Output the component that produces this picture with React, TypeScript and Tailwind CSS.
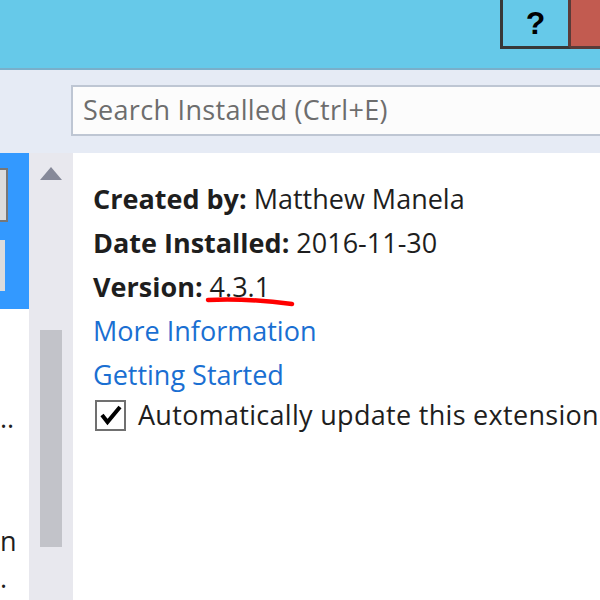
export default function App() {
  return (
    <div className="flex h-[600px] w-[600px] flex-col overflow-hidden bg-white font-['Open_Sans',sans-serif] text-[27px] text-[#1e1e1e]">
      {/* title bar */}
      <div className="flex h-[70px] shrink-0 items-start justify-end border-b-2 border-[#79afca] bg-[#66c9e9]">
        <div className="flex h-[49px] w-[71px] items-center justify-center border-b-[3px] border-l-[3px] border-r-[3px] border-b-[#383838] border-l-[#383838] border-r-[#5a3b38] font-['Liberation_Sans',sans-serif] text-[32px] leading-none font-bold text-black">
          ?
        </div>
        <div className="h-[49px] w-[29px] border-b-[3px] border-[#5a3b38] bg-[#c25b50]" />
      </div>

      {/* search strip */}
      <div className="h-[83px] shrink-0 bg-[#e6ebf5] pt-[15px] pl-[71px]">
        <div className="flex h-[51px] w-[560px] items-center border-2 border-[#bec6d3] bg-[#fcfcfc] pl-[10px] tracking-[0.3px] text-[#6d6d6d]">
          Search Installed (Ctrl+E)
        </div>
      </div>

      <div className="flex min-h-0 flex-1">
        {/* list column */}
        <div className="flex w-[29px] shrink-0 flex-col overflow-hidden">
          <div className="flex h-[156px] shrink-0 flex-col bg-[#3399ff] pt-[15px]">
            <div className="h-[54px] w-[8px] border-y-2 border-r-2 border-[#777777] bg-[#dcdcdc]" />
            <div className="mt-[18px] h-[51px] w-[5px] bg-[#dcdcdc]" />
          </div>
          <div className="flex flex-1 flex-col bg-white pt-[95px] leading-none">
            <span>..</span>
            <span className="mt-[96px]">n</span>
            <span className="mt-[10px]">.</span>
          </div>
        </div>

        {/* scrollbar */}
        <div className="flex w-[44px] shrink-0 flex-col items-center bg-[#e8e8ee] pt-[14px]">
          <svg width="22" height="13" viewBox="0 0 22 13" className="ml-[-1px]">
            <path d="M11 0 L22 13 L0 13 Z" fill="#868999" />
          </svg>
          <div className="mt-[150px] h-[217px] w-[22px] bg-[#c2c3c9]" />
        </div>

        {/* details */}
        <div className="relative flex-1 bg-white pt-[24px] pl-[20px] leading-[44px] whitespace-nowrap">
          <div>
            <span className="font-bold">Created by:</span> Matthew Manela
          </div>
          <div>
            <span className="font-bold">Date Installed:</span> 2016-11-30
          </div>
          <div>
            <span className="font-bold">Version:</span> 4.3.1
          </div>
          <div className="text-[#1a6fd2]">More Information</div>
          <div className="text-[#1a6fd2]">Getting Started</div>
          <div className="-mt-[4px] flex items-center gap-[12px] pl-[2px]">
            <div className="flex h-[31px] w-[31px] shrink-0 items-center justify-center border-2 border-[#707070] bg-white">
              <svg width="22" height="22" viewBox="0 0 22 22">
                <path d="M2 11 L7.5 18 L20 3" fill="none" stroke="#000" strokeWidth="4" strokeLinejoin="miter" />
              </svg>
            </div>
            <span className="tracking-[0.3px]">Automatically update this extension</span>
          </div>
          {/* hand-drawn red underline */}
          <svg className="absolute top-[144px] left-[132px]" width="92" height="12" viewBox="0 0 92 12">
            <path d="M3 3 Q40 1 87 7" fill="none" stroke="#f00" strokeWidth="4.5" strokeLinecap="round" />
          </svg>
        </div>
      </div>
    </div>
  );
}
